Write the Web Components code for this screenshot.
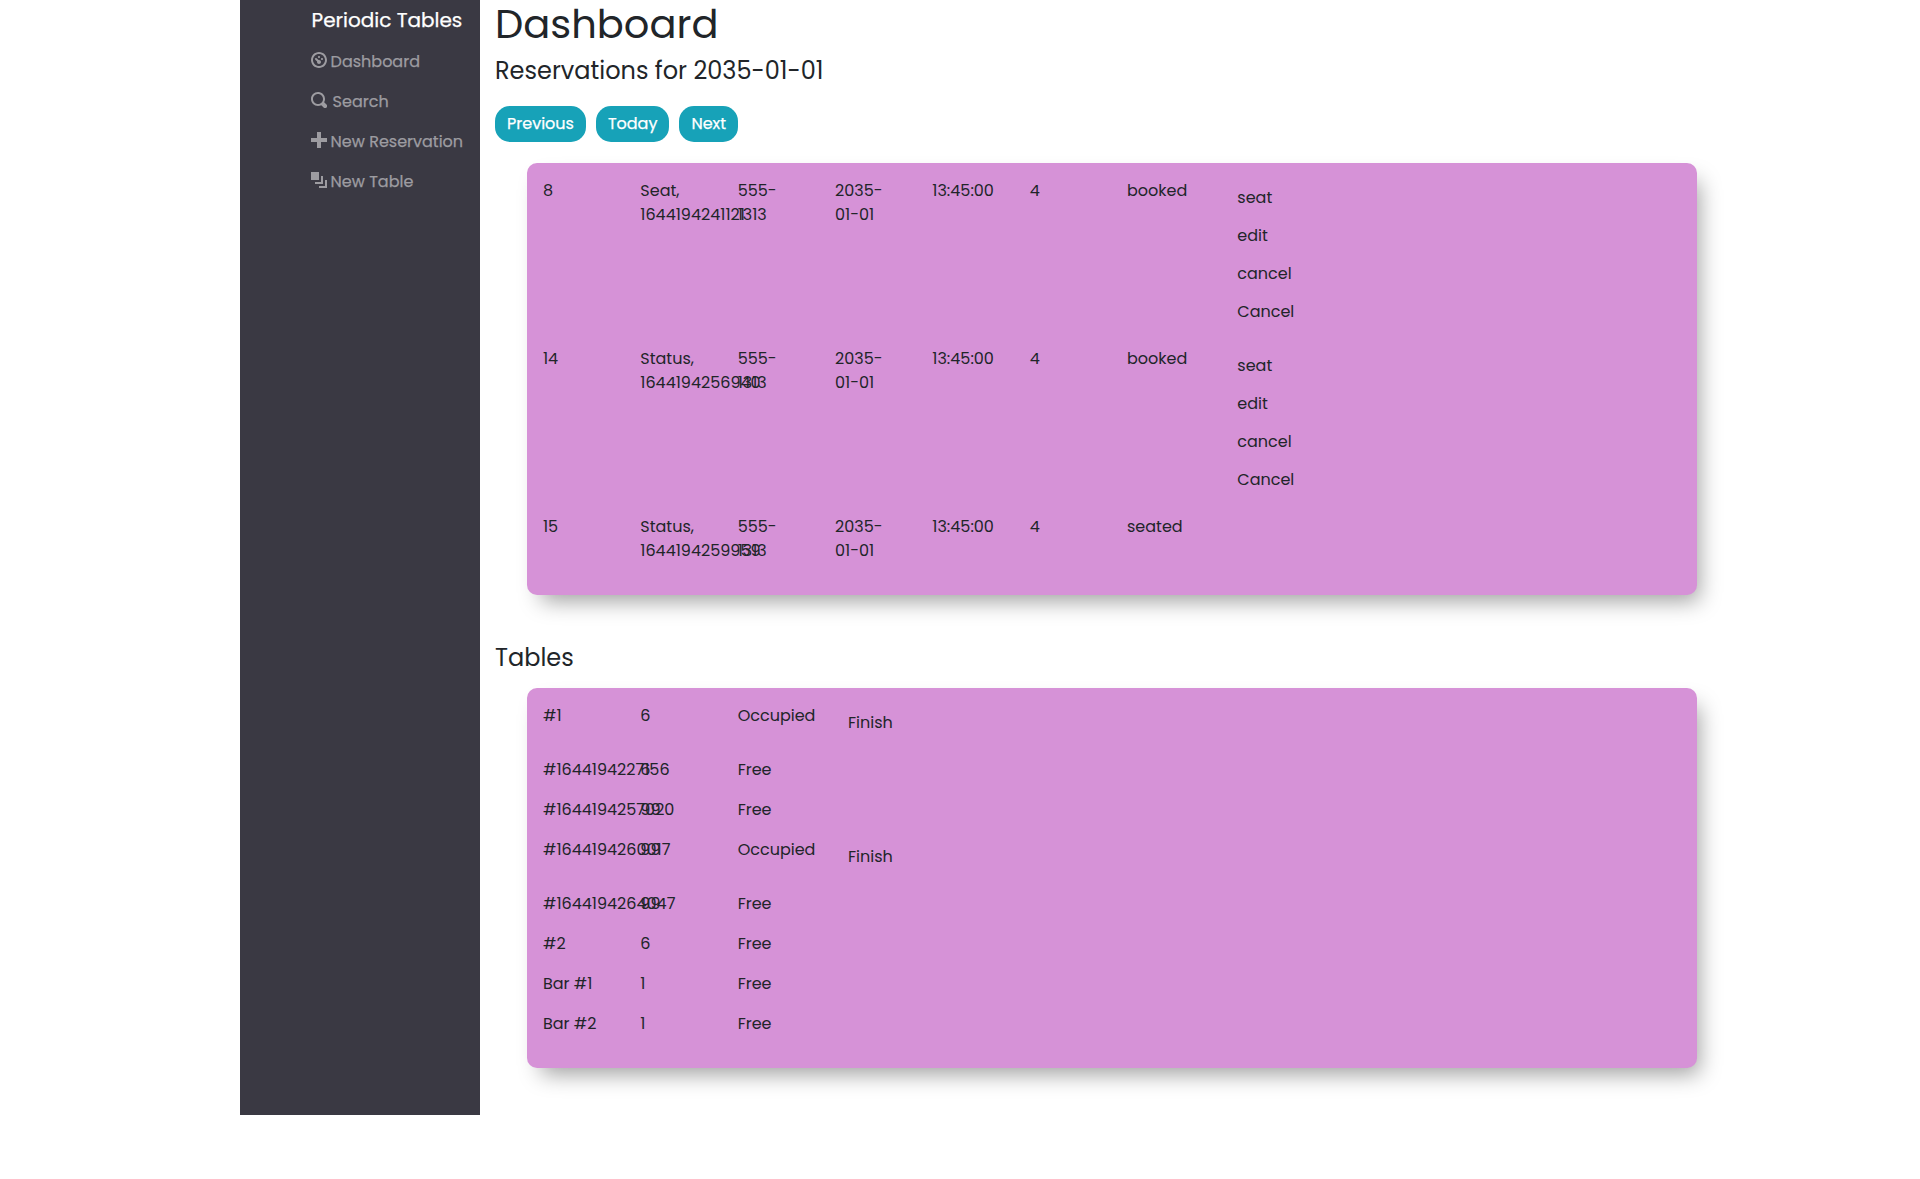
<!DOCTYPE html>
<html lang="en"><head><meta charset="utf-8"><title>Periodic Tables</title>
<style>
html,body{margin:0;background:#fff}
body{font-family:Poppins,Inter,"Open Sans",sans-serif;font-size:16px;line-height:24px;color:#212529}
</style></head><body>
<periodic-app></periodic-app>
<script>
const define=(name,css,html,setup)=>customElements.define(name,class extends HTMLElement{
  connectedCallback(){
    if(this.shadowRoot)return;
    const root=this.attachShadow({mode:'open'});
    root.innerHTML=`<style>:host{display:block;box-sizing:border-box}${css}</style>${html}`;
    if(setup)setup(this,root);
  }
});

const icons={
dashboard:'M4 0c-2.2 0-4 1.8-4 4s1.8 4 4 4 4-1.8 4-4-1.8-4-4-4zm0 1c1.66 0 3 1.34 3 3s-1.34 3-3 3-3-1.34-3-3 1.34-3 3-3zm0 1c-.28 0-.5.22-.5.5s.22.5.5.5.5-.22.5-.5-.22-.5-.5-.5zm-1.66 1a.5.5 0 0 0-.19.84l.91.91c-.02.08-.06.16-.06.25 0 .55.45 1 1 1s1-.45 1-1-.45-1-1-1c-.09 0-.17.04-.25.06l-.91-.91a.5.5 0 0 0-.44-.16.5.5 0 0 0-.06 0zm3.16 0c-.28 0-.5.22-.5.5s.22.5.5.5.5-.22.5-.5-.22-.5-.5-.5z',
search:'M3.5 0c-1.93 0-3.5 1.57-3.5 3.5s1.57 3.5 3.5 3.5c.59 0 1.17-.14 1.66-.41a1 1 0 0 0 .13.13l1 1a1.02 1.02 0 1 0 1.44-1.44l-1-1a1 1 0 0 0-.16-.13c.27-.49.44-1.06.44-1.66 0-1.93-1.55-3.5-3.5-3.5zm0 1c1.39 0 2.5 1.1 2.5 2.5 0 .66-.24 1.27-.66 1.72-.01.01-.02.02-.03.03a1 1 0 0 0-.13.13c-.44.4-1.04.63-1.69.63-1.39 0-2.5-1.1-2.5-2.5s1.1-2.5 2.5-2.5z',
plus:'M3 0v3h-3v2h3v3h2v-3h3v-2h-3v-3h-2z',
layers:'M0 0v4h4v-4h-4zm5 2v3h-3v1h4v-4h-1zm2 2v3h-3v1h4v-4h-1z'};

define('nav-item',':host{display:flex;height:40px;padding:8px 0;color:#9d9ca1}svg{width:16px;height:16px;margin:2px 4px 0 0;fill:currentColor;flex:none}:host([icon=search]) svg{margin-right:6px}',
'<svg viewBox="0 0 8 8"><path/></svg><slot></slot>',
(el,root)=>root.querySelector('path').setAttribute('d',icons[el.getAttribute('icon')]));

define('side-bar',':host{width:240px;height:1115px;background:#3a3943;padding-left:70.6px;flex:none;-webkit-text-stroke:.25px}.brand{color:#fff;font-size:20px;line-height:24px;padding:8px 0 10px 1px}',
`<div class="brand">Periodic Tables</div>
<nav-item icon="dashboard">Dashboard</nav-item>
<nav-item icon="search">Search</nav-item>
<nav-item icon="plus">New Reservation</nav-item>
<nav-item icon="layers">New Table</nav-item>`);

define('pill-button',':host{height:36px;padding:6px 12px;border-radius:15px;background:#17a2b8;color:#fff;-webkit-text-stroke:.25px}','<slot></slot>');

define('data-card',':host{width:1170px;margin-left:32px;padding:16px;border-radius:10px;background:#d692d7;box-shadow:8px 12px 22px -6px rgba(0,0,0,.38)}','<slot></slot>');

define('data-row',':host{display:flex;padding-bottom:16px}','<slot></slot>');
define('data-cell',':host{width:97.33px;flex:none}','<slot></slot>');
define('text-action',':host{height:38px;padding:7px 13px}','<slot></slot>');

const cell=(...lines)=>`<data-cell>${lines.join('<br>')}</data-cell>`;
const actions=list=>`<data-cell>${list.map(a=>`<text-action>${a}</text-action>`).join('')}</data-cell>`;

const reservations=[['8','Seat,','1644194241121','booked'],['14','Status,','1644194256940','booked'],['15','Status,','1644194259959','seated']];
define('reservation-list','',`<data-card>${reservations.map(([id,last,first,status])=>`<data-row>${cell(id)}${cell(last,first)}${cell('555-','1313')}${cell('2035-','01-01')}${cell('13:45:00')}${cell('4')}${cell(status)}${status==='booked'?actions(['seat','edit','cancel','Cancel']):''}</data-row>`).join('')}</data-card>`);

const tables=[['#1','6',1],['#1644194227156','6',0],['#1644194257020','99',0],['#1644194260017','99',1],['#1644194264047','99',0],['#2','6',0],['Bar #1','1',0],['Bar #2','1',0]];
define('table-list','',`<data-card>${tables.map(([name,seats,busy])=>`<data-row>${cell(name)}${cell(seats)}${cell(busy?'Occupied':'Free')}${busy?actions(['Finish']):''}</data-row>`).join('')}</data-card>`);

define('dashboard-view',':host{padding-left:15px;flex:1}h1,h2{margin:0;font-weight:400}h1{font-size:40px;line-height:48px}h2{font-size:24px;line-height:28.8px}.date{padding:9px 0 19.8px}.buttons{display:flex;gap:10px;padding-bottom:21px}.tables{padding:49px 0 15.2px}',
`<h1>Dashboard</h1>
<h2 class="date">Reservations for 2035-01-01</h2>
<div class="buttons"><pill-button>Previous</pill-button><pill-button>Today</pill-button><pill-button>Next</pill-button></div>
<reservation-list></reservation-list>
<h2 class="tables">Tables</h2>
<table-list></table-list>`);

define('periodic-app',':host{display:flex;margin-left:240px;width:1460px}','<side-bar></side-bar><dashboard-view></dashboard-view>');
</script>
</body></html>
